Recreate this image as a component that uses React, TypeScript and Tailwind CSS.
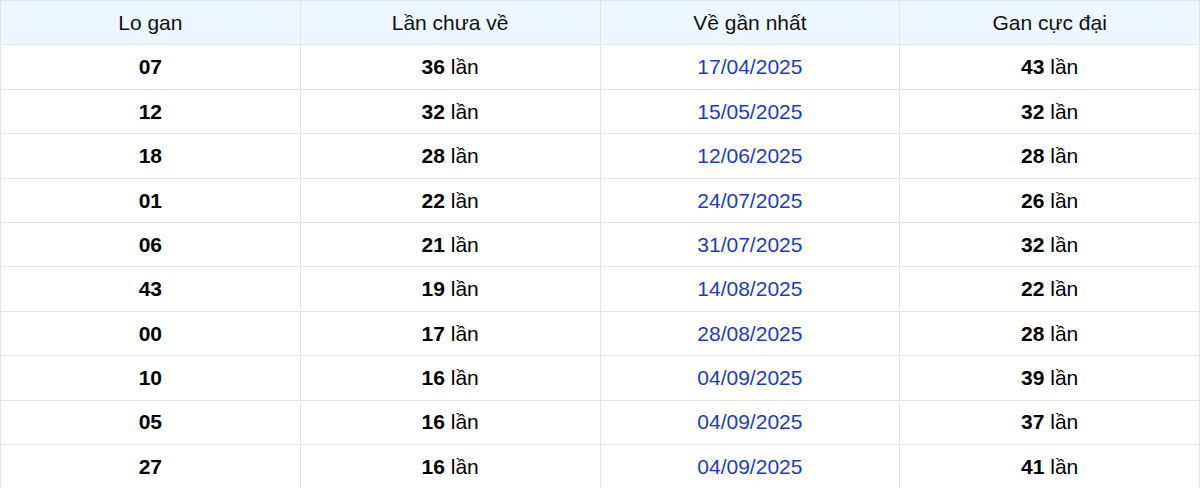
const rows = [
  ['07', '36', '17/04/2025', '43'],
  ['12', '32', '15/05/2025', '32'],
  ['18', '28', '12/06/2025', '28'],
  ['01', '22', '24/07/2025', '26'],
  ['06', '21', '31/07/2025', '32'],
  ['43', '19', '14/08/2025', '22'],
  ['00', '17', '28/08/2025', '28'],
  ['10', '16', '04/09/2025', '39'],
  ['05', '16', '04/09/2025', '37'],
  ['27', '16', '04/09/2025', '41'],
]

const headers = ['Lo gan', 'Lần chưa về', 'Về gần nhất', 'Gan cực đại']

const cell =
  'flex h-[44.4px] items-center justify-center border-r border-b border-[#e3e5e9]'

export default function App() {
  return (
    <div className="w-[1200px] bg-white font-['Liberation_Sans',Arial,sans-serif] text-[21px] text-[#111]">
      <div className="border-l border-t border-[#e3e5e9]">
        {/* Header */}
        <div className="grid grid-cols-4 bg-[#eef6ff]">
          {headers.map((h) => (
            <div key={h} className={cell}>
              {h}
            </div>
          ))}
        </div>

        {/* Body */}
        {rows.map(([lo, count, date, max]) => (
          <div key={lo} className="grid grid-cols-4">
            <div className={`${cell} font-bold text-black`}>{lo}</div>
            <div className={`${cell} text-black`}>
              <span className="font-bold">{count}</span>
              <span>&nbsp;lần</span>
            </div>
            <div className={`${cell} text-[#1a3cc4]`}>{date}</div>
            <div className={`${cell} text-black`}>
              <span className="font-bold">{max}</span>
              <span>&nbsp;lần</span>
            </div>
          </div>
        ))}
      </div>
    </div>
  )
}
